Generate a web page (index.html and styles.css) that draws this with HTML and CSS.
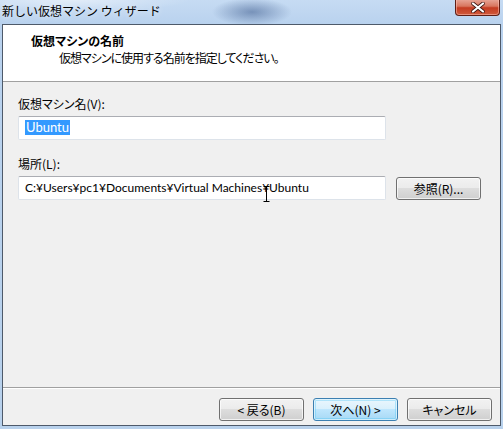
FILE: index.html
```html
<!DOCTYPE html>
<html lang="ja">
<head>
<meta charset="utf-8">
<title>新しい仮想マシン ウィザード</title>
<link rel="stylesheet" href="styles.css">
</head>
<body>
<div class="window">
  <div class="titlebar">
    <span class="title">新しい仮想マシン ウィザード</span>
    <button class="close" aria-label="閉じる">
      <svg width="14" height="11" viewBox="0 0 14 11"><path d="M2 1.5 L12 9.5 M12 1.5 L2 9.5" stroke="#3a1410" stroke-width="3.6" stroke-linecap="round"/><path d="M2 1.5 L12 9.5 M12 1.5 L2 9.5" stroke="#fff" stroke-width="2.2" stroke-linecap="round"/></svg>
    </button>
  </div>
  <div class="client">
    <div class="header">
      <div class="h-title">仮想マシンの名前</div>
      <div class="h-sub">仮想マシンに使用する名前を指定してください。</div>
    </div>
    <div class="body">
      <div class="form">
        <label class="label">仮想マシン名(V):</label>
        <div class="row">
          <div class="input"><span class="sel">Ubuntu</span></div>
        </div>
        <label class="label label2">場所(L):</label>
        <div class="row">
          <div class="input input-path">C:¥Users¥pc1¥Documents¥Virtual Machines¥Ubuntu
            <svg class="ibeam" width="7" height="16" viewBox="0 0 7 16"><path d="M0.5 0.5 H6.5 M3.5 0.5 V15.5 M0.5 15.5 H6.5" stroke="#000" stroke-width="1" fill="none"/></svg>
          </div>
          <button class="btn btn-browse">参照(R)...</button>
        </div>
      </div>
      <div class="footer">
        <button class="btn">&lt; 戻る(B)</button>
        <button class="btn btn-default">次へ(N) &gt;</button>
        <button class="btn">キャンセル</button>
      </div>
    </div>
  </div>
</div>
</body>
</html>
```

FILE: styles.css
```css
html, body {
  margin: 0;
  padding: 0;
}
body {
  font-family: "Noto Sans CJK JP", "Noto Sans", sans-serif;
  font-size: 12px;
  font-feature-settings: "palt";
  color: #000;
}
.window {
  width: 503px;
  height: 429px;
  box-sizing: border-box;
  display: flex;
  flex-direction: column;
  background:
    radial-gradient(ellipse 40px 14px at 252px 12px, rgba(60, 90, 140, 0.55), rgba(60, 90, 140, 0) 100%),
    radial-gradient(ellipse 120px 12px at 70px 0px, rgba(255, 255, 255, 0.5), rgba(255, 255, 255, 0) 100%),
    linear-gradient(#c6dbf3, #b9d2ee 24px, #b8d1ec);
}
.titlebar {
  height: 24px;
  display: flex;
  align-items: flex-start;
  justify-content: space-between;
  position: relative;
}
.title {
  padding: 3px 0 0 2px;
  line-height: 16px;
  color: #000;
  font-feature-settings: normal;
  text-shadow: 0 0 6px rgba(255, 255, 255, 0.9);
}
.close {
  width: 45px;
  height: 17px;
  margin: -1px 3px 0 0;
  padding: 0;
  border: 1px solid #5e1e15;
  border-top: none;
  border-radius: 0 0 4px 4px;
  background: linear-gradient(#e9a99b, #d8765f 45%, #c43c22 55%, #d05a3c);
  box-shadow: inset 0 0 0 1px rgba(255, 200, 190, 0.5);
  display: flex;
  align-items: center;
  justify-content: center;
}
.client {
  flex: 1;
  margin: 0 2px 3px 2px;
  border: 1px solid #4e5a6a;
  display: flex;
  flex-direction: column;
  background: #f0f0f0;
}
.header {
  height: 56px;
  background: #fff;
  border-bottom: 1px solid #a0a0a0;
  box-sizing: content-box;
  padding-left: 28px;
}
.h-title {
  font-weight: bold;
  line-height: 16px;
  padding-top: 8px;
}
.h-sub {
  line-height: 16px;
  padding-left: 28px;
  margin-top: 1px;
  letter-spacing: -1px;
}
.body {
  flex: 1;
  display: flex;
  flex-direction: column;
}
.form {
  flex: 1;
  padding: 14px 0 0 15px;
  display: flex;
  flex-direction: column;
}
.label {
  line-height: 16px;
  height: 16px;
  margin-bottom: 4px;
}
.label2 {
  margin-top: 16px;
}
.row {
  display: flex;
  align-items: center;
  gap: 10px;
}
.input {
  width: 368px;
  height: 24px;
  box-sizing: border-box;
  background: #fff;
  border: 1px solid #dde3ea;
  border-top-color: #abadb3;
  border-radius: 2px;
  padding: 3px 0 0 6px;
  line-height: 16px;
  position: relative;
  white-space: nowrap;
  font-family: "Lato", "Noto Sans CJK JP", sans-serif;
}
.sel {
  background: #3399ff;
  color: #fff;
  padding: 0 1px 0 1px;
  display: inline-block;
  line-height: 15px;
  font-size: 13px;
}
.input-path {
  font-size: 12px;
}
.ibeam {
  position: absolute;
  left: 244px;
  top: 9px;
}
.btn {
  font-family: inherit;
  font-size: 12px;
  font-feature-settings: "palt";
  width: 85px;
  height: 23px;
  padding: 0;
  border: 1px solid #707070;
  border-radius: 3px;
  background: linear-gradient(#f2f2f2, #ebebeb 50%, #dddddd 50%, #cfcfcf);
  box-shadow: inset 0 0 0 1px rgba(255, 255, 255, 0.7);
  color: #000;
  line-height: 16px;
}
.btn-browse {
  margin-top: 1px;
}
.btn-default {
  border-color: #3c7fb1;
  background: linear-gradient(#eaf6fd, #d9f0fc 50%, #bee6fd 50%, #a7d9f5);
  box-shadow: inset 0 0 0 1px rgba(255, 255, 255, 0.6), inset 0 0 0 2px rgba(72, 196, 244, 0.35);
}
.footer {
  height: 38px;
  border-top: 1px solid #a0a0a0;
  box-shadow: inset 0 1px 0 #fff;
  display: flex;
  justify-content: flex-end;
  align-items: flex-start;
  gap: 9px;
  padding: 10px 8px 0 0;
  box-sizing: border-box;
}
```
